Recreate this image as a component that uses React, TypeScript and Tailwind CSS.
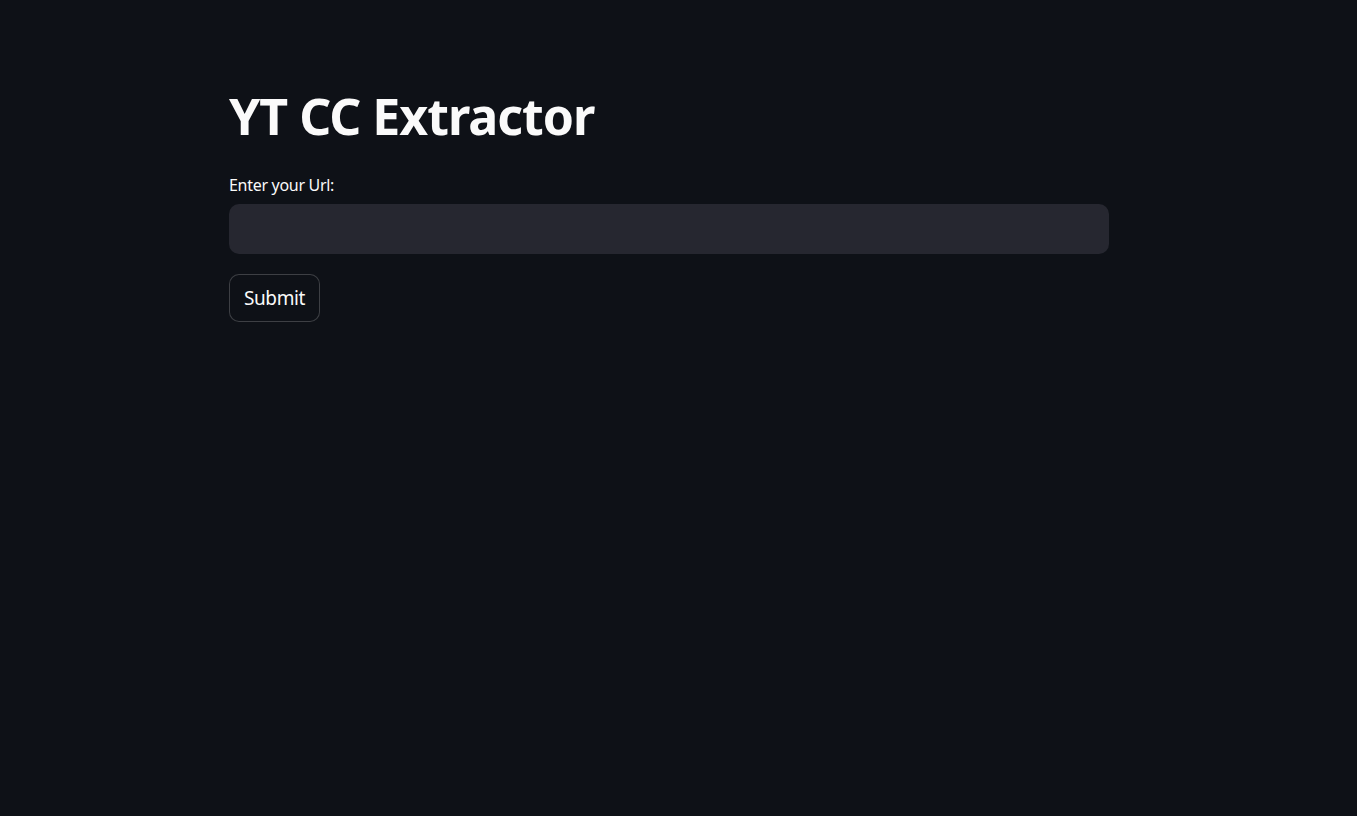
import React, { useState } from 'react';

function App() {
  const [url, setUrl] = useState('');

  return (
    <div className="min-h-screen w-full bg-[#0e1117] text-[#fafafa]" style={{ fontFamily: '"Noto Sans", "Open Sans", sans-serif' }}>
      <div className="ml-[229px] w-[880px] pt-[82px]">
        <h1 className="text-[50px] font-bold leading-[68px] tracking-[-1px]">YT CC Extractor</h1>

        <div className="mt-[24px]">
          <label className="block text-[16px] leading-[22px] tracking-[-0.3px]">Enter your Url:</label>
          <input
            value={url}
            onChange={(e) => setUrl(e.target.value)}
            className="mt-[8px] h-[50px] w-full rounded-[10px] bg-[#262730] px-4 text-[18px] text-[#fafafa] outline-none"
          />
        </div>

        <button className="mt-[20px] h-[48px] rounded-[10px] border border-[#fafafa33] bg-[#0e1117] px-[14px] text-[19px] tracking-[-0.4px] text-[#fafafa]">
          Submit
        </button>
      </div>
    </div>
  );
}

export default App;
